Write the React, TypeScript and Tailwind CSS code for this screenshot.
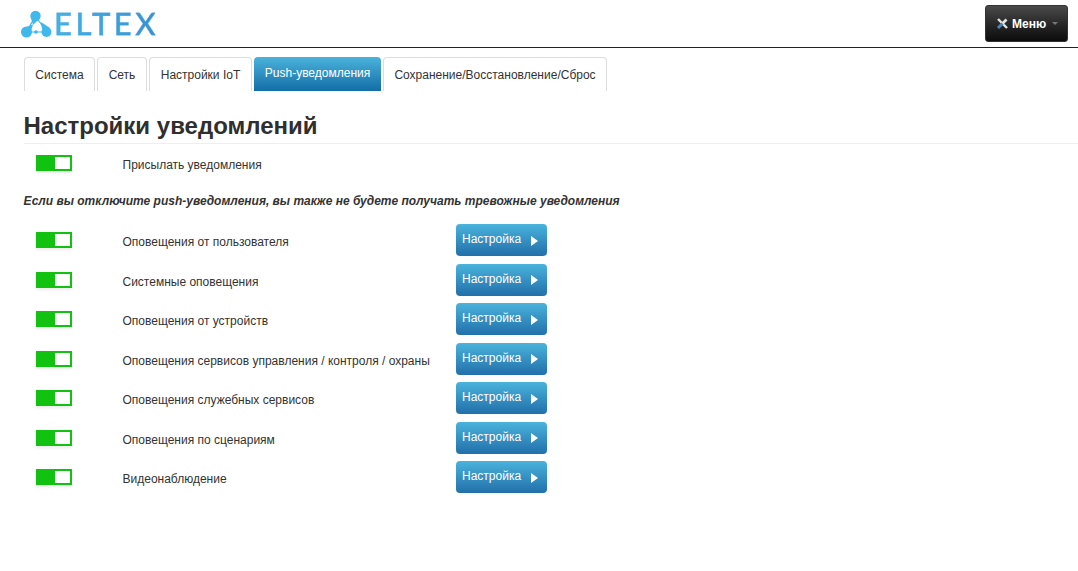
const tabs = [
  { label: "Система", width: "w-[71px]" },
  { label: "Сеть", width: "w-[50px]" },
  { label: "Настройки IoT", width: "w-[103px]" },
  { label: "Push-уведомления", width: "w-[127px]", active: true },
  { label: "Сохранение/Восстановление/Сброс", width: "w-[224px]" },
];

const rows = [
  "Оповещения от пользователя",
  "Системные оповещения",
  "Оповещения от устройств",
  "Оповещения сервисов управления / контроля / охраны",
  "Оповещения служебных сервисов",
  "Оповещения по сценариям",
  "Видеонаблюдение",
];

function Logo() {
  return (
    <div className="flex items-center">
      <svg width="34" height="30" viewBox="0 0 34 30">
        <path d="M15.5 7 L26.5 23 L6.5 23 Z" stroke="#3fb8ec" strokeWidth="1.2" fill="none" />
        <path d="M11 9 L20 9 L13 16 Z" fill="#3fb8ec" />
        <path d="M4 19 L11 22 L13 15.5 Z" fill="#3fb8ec" />
        <path d="M22 20 L30 19 L21 13 Z" fill="#3fb8ec" />
        <circle cx="15.5" cy="7" r="5.2" fill="#3fb8ec" />
        <circle cx="6.5" cy="23" r="5.5" fill="#3fb8ec" />
        <circle cx="26.5" cy="23" r="5" fill="#3fb8ec" />
        <circle cx="16" cy="23" r="1.8" fill="#3fb8ec" />
      </svg>
      <span className="bg-gradient-to-r from-[#43b4e6] to-[#3a8fcf] bg-clip-text font-['Lato',sans-serif] text-[31px] leading-none font-medium tracking-[3.5px] text-transparent [-webkit-text-stroke:0.3px_#3fa3dc]">
        ELTEX
      </span>
    </div>
  );
}

function MenuButton() {
  return (
    <button className="flex h-[37px] w-[83px] items-center rounded-[3px] border border-[#333] bg-gradient-to-b from-[#4a4a4a] to-[#0c0c0c] pl-[10px] text-[12px] font-bold text-white">
      <svg width="13" height="13" viewBox="0 0 13 13" className="mr-[3px]">
        <path d="M2 2 L11 11" stroke="#e4e4e4" strokeWidth="2.4" />
        <path d="M10.5 2.5 L6 7" stroke="#e4e4e4" strokeWidth="2.6" />
        <path d="M6.5 6.5 L2 11" stroke="#4d86b8" strokeWidth="3" />
      </svg>
      Меню
      <span className="ml-[6px] h-0 w-0 border-x-[3px] border-t-[3px] border-x-transparent border-t-[#777]" />
    </button>
  );
}

function Toggle({ className = "" }: { className?: string }) {
  return (
    <div
      className={`flex h-[16px] w-[36px] justify-end bg-[#11c211] pt-[2px] pr-[2px] pb-[2px] shadow-[0_2px_3px_rgba(0,0,0,0.08)] ${className}`}
    >
      <div className="w-[15px] bg-white" />
    </div>
  );
}

function SettingsButton() {
  return (
    <button className="flex h-[32px] w-[91px] items-center justify-between rounded-[4px] bg-gradient-to-b from-[#4ab3dc] to-[#2270aa] pr-[9px] pl-[6px] text-[12px] text-white">
      <span className="-mt-[2px]">Настройка</span>
      <span className="mt-[1px] h-0 w-0 border-y-[5px] border-l-[7px] border-y-transparent border-l-white" />
    </button>
  );
}

export default function App() {
  return (
    <div className="min-h-[571px] bg-white font-['Liberation_Sans',sans-serif] text-[12px] text-[#333]">
      <header className="flex h-[48px] items-start justify-between border-b border-[#222] pt-[5px] pr-[10px] pl-[20px]">
        <div className="pt-[3px]">
          <Logo />
        </div>
        <MenuButton />
      </header>

      <nav className="mt-[9px] flex gap-[2px] pl-[24px]">
        {tabs.map((tab) =>
          tab.active ? (
            <div
              key={tab.label}
              className={`${tab.width} h-[34px] rounded-t-[4px] bg-gradient-to-b from-[#4ab3dc] to-[#126ea6] pt-[7px] text-center text-white`}
            >
              {tab.label}
            </div>
          ) : (
            <div
              key={tab.label}
              className={`${tab.width} h-[34px] rounded-t-[4px] border border-b-0 border-[#ddd] pt-[8px] text-center`}
            >
              {tab.label}
            </div>
          ),
        )}
      </nav>

      <h1 className="mt-[20px] ml-[23.5px] border-b border-[#eee] pb-[2px] text-[24px] leading-[30px] font-bold text-[#2f2f2f]">
        Настройки уведомлений
      </h1>

      <div className="flex h-[40px] items-center pl-[36px]">
        <Toggle className="-mt-[2px]" />
        <span className="ml-[50.5px] pt-[2px]">Присылать уведомления</span>
      </div>

      <p className="mt-[8px] ml-[23.5px] text-[12px] font-bold italic">
        Если вы отключите push-уведомления, вы также не будете получать тревожные уведомления
      </p>

      <div className="mt-[10.7px] flex flex-col">
        {rows.map((row) => (
          <div key={row} className="flex h-[39.5px] items-center pl-[36px]">
            <Toggle />
            <span className="ml-[50.5px] w-[333.5px] pt-[4px]">{row}</span>
            <SettingsButton />
          </div>
        ))}
      </div>
    </div>
  );
}
